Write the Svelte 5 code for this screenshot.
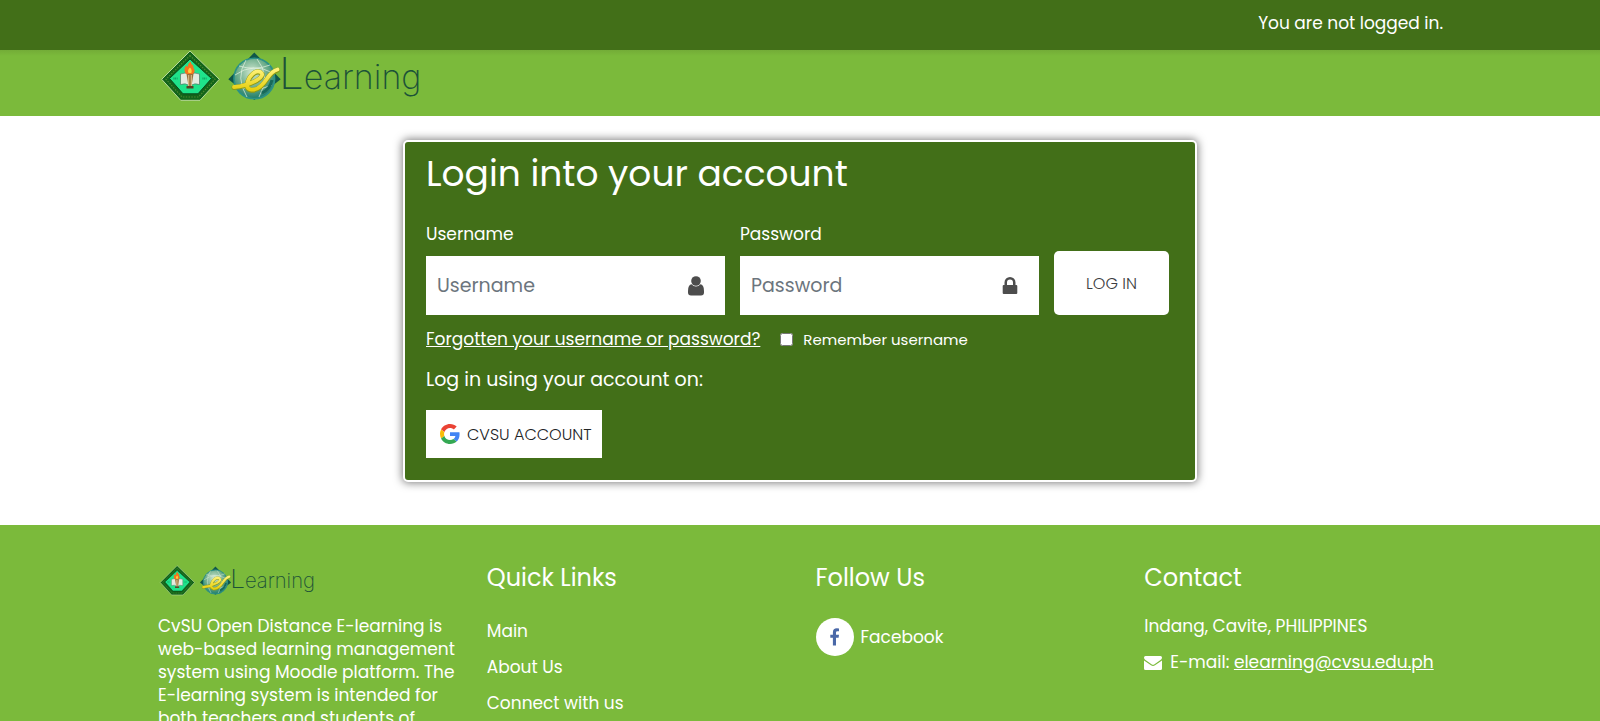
<script>
  const links = ['Main', 'About Us', 'Connect with us'];
  let username = $state('');
  let password = $state('');
  let remember = $state(false);
</script>

{#snippet brand()}
  <svg viewBox="0 0 265 56" role="img" aria-label="eLearning">
    <defs>
      <radialGradient id="globe" cx="45%" cy="35%" r="65%">
        <stop offset="0" stop-color="#d3e9d3" />
        <stop offset="0.55" stop-color="#6fae8c" />
        <stop offset="1" stop-color="#1f7d6b" />
      </radialGradient>
      <linearGradient id="swoosh" x1="0" y1="0" x2="0" y2="1">
        <stop offset="0" stop-color="#fff27a" />
        <stop offset="1" stop-color="#e6cf10" />
      </linearGradient>
    </defs>
    <path d="M32 1 61.300 29.300 42 50.300H22.700L3.700 29.300Z" fill="#12641a" stroke="#b9d99a" stroke-width="1" />
    <path d="M32 5.500 57 29.300 40.500 47H24L8 29.300Z" fill="none" stroke="#4f8630" stroke-width="1.200" stroke-dasharray="1.500 1.300" />
    <path d="M32 9 53.500 28.500 40 43.800H25L11.500 28.500Z" fill="#1fe38b" stroke="#0a4a1c" stroke-width="1" />
    <path d="M15.500 28.500h4M44.500 28.500h4" stroke="#0f9a5c" stroke-width="2" stroke-dasharray="1 .7" />
    <path d="M22.500 24q5-2.500 9.500 1 4.500-3.500 9.500-1v10.500q-5-2-9.500 1.500-4.500-3.500-9.500-1.500Z" fill="#e4ebe0" stroke="#587468" stroke-width=".7" />
    <path d="M28.500 24h7l-2 12h-3Z" fill="#99703a" />
    <path d="M30.200 25h1v11h-1zM32.800 25h1v11h-1z" fill="#e1c491" />
    <path d="M28.500 36h7v2.500h-7z" fill="#5b4023" />
    <path d="M28 24q-3.500-5 .5-8.500l1.200 1.500q0-3.500 2.800-5.500.5 3 2.700 4l.3 2.500q2.500 3-.5 6Z" fill="#f5731d" />
    <path d="M30.500 23q-1.500-3 1.500-5.500 2.500 2.500 1.300 5.500Z" fill="#ffd23f" />

    <path d="M96.300 2.500 122.700 29.300 96.300 50 70.300 29.300Z" fill="#10564a" />
    <circle cx="96.300" cy="28.500" r="20.300" fill="url(#globe)" stroke="#2b9187" stroke-width="1.600" />
    <g fill="none" stroke="#e8f4e4" stroke-width=".9" opacity=".75">
      <path d="M77 25q18-13 38-2M79 36q18 7 35-1M88 10q-11 18 1 37M99 9q14 17 2 38M81 16q16 5 31-1" />
    </g>
    <path d="M104 43q8-4 10-13" fill="none" stroke="#17695a" stroke-width="3" />
    <path d="M76 37.500Q88 36.500 99 30.500 107 25.500 102.500 22.500 97 20 91.500 28 86 38 92.500 40 101 41.500 109 29 114 21.500 119.500 20" fill="none" stroke="#8e9914" stroke-width="5" stroke-linecap="round" stroke-linejoin="round" />
    <path d="M76 37Q88 36 99 30 107 25 102.500 22 97 19.500 91.500 27.500 86 37.500 92.500 39.500 101 41 109 28.500 114 21 119.500 19.500" fill="none" stroke="url(#swoosh)" stroke-width="3.800" stroke-linecap="round" stroke-linejoin="round" />
    <text class="wordmark" x="121" y="39"><tspan font-size="44">L</tspan><tspan font-size="34">earning</tspan></text>
  </svg>
{/snippet}

<div class="page">
  <div class="topbar">
    <div class="container">You are not logged in.</div>
  </div>

  <header>
    <div class="container">
      <a class="logo" href="#home">{@render brand()}</a>
    </div>
  </header>

  <main>
    <section class="card">
      <h1>Login into your account</h1>
      <form onsubmit={(e) => e.preventDefault()}>
        <div class="fields">
          <div class="field">
            <label for="username">Username</label>
            <div class="control">
              <input id="username" type="text" placeholder="Username" bind:value={username} />
              <svg width="18" height="20" viewBox="0 0 18 20" aria-hidden="true">
                <circle cx="9" cy="5" r="4.800" />
                <path d="M4.600 8.300Q6.400 10.600 9 10.600T13.400 8.300Q17 8.700 17 15v1.500q0 3-3 3H4q-3 0-3-3V15Q1 8.700 4.600 8.300Z" />
              </svg>
            </div>
          </div>
          <div class="field">
            <label for="password">Password</label>
            <div class="control">
              <input id="password" type="password" placeholder="Password" bind:value={password} />
              <svg width="18" height="20" viewBox="0 0 18 20" aria-hidden="true">
                <path fill-rule="evenodd" d="M3.500 9V6.500a5.500 5.500 0 0 1 11 0V9h.7q1.100 0 1.100 1.100v6.800q0 1.100-1.100 1.100H2.800q-1.100 0-1.100-1.100v-6.800Q1.700 9 2.800 9ZM6 9h6V6.500a3 3 0 0 0-6 0Z" />
              </svg>
            </div>
          </div>
          <button class="login" type="submit">LOG IN</button>
        </div>
        <div class="options">
          <a href="#forgot">Forgotten your username or password?</a>
          <label class="remember">
            <input type="checkbox" bind:checked={remember} />
            Remember username
          </label>
        </div>
      </form>
      <h2>Log in using your account on:</h2>
      <a class="provider" href="#google">
        <svg width="20" height="20" viewBox="0 0 48 48" aria-hidden="true">
          <path fill="#EA4335" d="M24 9.500c3.540 0 6.710 1.220 9.210 3.600l6.850-6.850C35.900 2.380 30.470 0 24 0 14.620 0 6.510 5.380 2.560 13.220l7.980 6.190C12.430 13.720 17.740 9.500 24 9.500z" />
          <path fill="#4285F4" d="M46.980 24.550c0-1.570-.15-3.090-.38-4.550H24v9.020h12.940c-.58 2.960-2.260 5.480-4.780 7.180l7.730 6c4.510-4.180 7.090-10.360 7.090-17.650z" />
          <path fill="#FBBC05" d="M10.530 28.590A14.500 14.500 0 0 1 9.770 24c0-1.600.27-3.140.76-4.590l-7.980-6.190A23.900 23.900 0 0 0 0 24c0 3.880.92 7.540 2.560 10.780z" />
          <path fill="#34A853" d="M24 48c6.480 0 11.930-2.130 15.890-5.810l-7.730-6c-2.150 1.450-4.920 2.300-8.160 2.300-6.260 0-11.570-4.220-13.470-9.910l-7.980 6.190C6.510 42.620 14.620 48 24 48z" />
        </svg>
        CVSU ACCOUNT
      </a>
    </section>
  </main>

  <footer>
    <div class="container columns">
      <div>
        <div class="footlogo">{@render brand()}</div>
        <p>
          CvSU Open Distance E-learning is web-based learning management system using Moodle platform. The
          E-learning system is intended for both teachers and students of
        </p>
      </div>
      <div>
        <h3>Quick Links</h3>
        <ul>
          {#each links as link}
            <li><a href="#links">{link}</a></li>
          {/each}
        </ul>
      </div>
      <div>
        <h3>Follow Us</h3>
        <a class="social" href="#facebook">
          <span class="disc">
            <svg width="10" height="18" viewBox="0 0 10 18" aria-hidden="true">
              <path d="M9 .4v2.900H7.300Q6 3.300 6 4.600v2.200h3l-.4 3H6v7.700H2.900V9.800H.3v-3h2.600V4.400Q2.900.2 6.900.2 8.300.2 9 .4Z" fill="#4a68a8" />
            </svg>
          </span>
          Facebook
        </a>
      </div>
      <div>
        <h3>Contact</h3>
        <p>Indang, Cavite, PHILIPPINES</p>
        <p class="mail">
          <svg width="18" height="14" viewBox="0 0 18 14" aria-hidden="true">
            <path d="M0 1.500Q0 0 1.500 0h15Q18 0 18 1.500 18 3 16.500 4L10.500 8.200Q9 9.200 7.500 8.200L1.500 4Q0 3 0 1.500ZM0 4.500 7 9.300q2 1.400 4 0L18 4.500v8q0 1.500-1.500 1.500h-15Q0 14 0 12.500Z" fill="#fff" />
          </svg>
          <span>E-mail: <a href="mailto:elearning@cvsu.edu.ph">elearning@cvsu.edu.ph</a></span>
        </p>
      </div>
    </div>
  </footer>
</div>

<style>
  :global(body) {
    margin: 0;
    background: #fff;
  }
  .page {
    display: flex;
    flex-direction: column;
    height: 100vh;
    overflow: hidden;
    font: 17px/23px Poppins, Inter, sans-serif;
    color: #fff;
  }
  .page :global(*) {
    box-sizing: border-box;
  }
  a {
    color: inherit;
  }
  h1,
  h2,
  h3,
  p,
  ul {
    margin: 0;
    padding: 0;
    font-weight: 400;
  }
  .container {
    width: 100%;
    max-width: 1316px;
    margin: 0 auto;
    padding: 0 15px 0 16px;
  }
  .topbar {
    flex: none;
    background: #426f18;
    text-align: right;
    padding: 12px 0 15px;
  }
  header {
    flex: none;
    background: linear-gradient(#73ac37, #7bba3b 6px);
    padding-bottom: 10px;
  }
  .logo {
    display: block;
    width: 265px;
  }
  svg {
    display: block;
    flex: none;
    overflow: visible;
  }
  .logo svg,
  .footlogo svg {
    width: 100%;
  }
  .wordmark {
    font-family: Inter, sans-serif;
    font-weight: 200;
    fill: #1c5238;
  }
  main {
    flex: none;
    padding: 24px 15px 43px;
  }
  .card {
    max-width: 794px;
    margin: 0 auto;
    padding: 10px 26px 22px 21px;
    background: #426f18;
    border: 2px solid #fff;
    border-radius: 5px;
    box-shadow: 0 0 8px 1px rgba(0, 0, 0, 0.5);
  }
  h1 {
    font-size: 36px;
    line-height: 44px;
    margin-bottom: 27px;
  }
  .fields {
    display: flex;
    align-items: flex-end;
    gap: 15px;
  }
  .field {
    flex: 1;
    min-width: 0;
  }
  .field label {
    display: block;
    margin-bottom: 10px;
  }
  .control {
    display: flex;
    align-items: center;
    background: #fff;
    padding-right: 20px;
  }
  .control input {
    flex: 1;
    min-width: 0;
    height: 59px;
    padding: 0 11px;
    border: 0;
    background: none;
    font: inherit;
    font-size: 19px;
    color: #495057;
  }
  .control input::placeholder {
    color: #6c757d;
    opacity: 1;
  }
  .control svg {
    fill: #4d4d4d;
  }
  .login {
    width: 115px;
    height: 64px;
    border: 0;
    border-radius: 5px;
    background: #fff;
    font: inherit;
    font-size: 16px;
    font-weight: 300;
    color: #3c3d41;
  }
  .options {
    display: flex;
    align-items: center;
    gap: 20px;
    margin-top: 13px;
  }
  .remember {
    display: flex;
    align-items: center;
    gap: 10px;
    font-size: 15px;
  }
  .remember input {
    width: 13px;
    height: 13px;
    margin: 0;
  }
  h2 {
    font-size: 19px;
    line-height: 24px;
    margin: 17px 0 18px;
  }
  .provider {
    display: inline-flex;
    align-items: center;
    gap: 7px;
    height: 48px;
    padding: 0 10px 0 14px;
    background: #fff;
    color: #222426;
    font-size: 16px;
    font-weight: 300;
    text-decoration: none;
    vertical-align: top;
  }
  footer {
    flex: 1 0 auto;
    background: #7bba3b;
    padding-top: 40px;
  }
  .columns {
    display: grid;
    grid-template-columns: repeat(4, 1fr);
    gap: 30px;
  }
  .footlogo {
    width: 158px;
    height: 50px;
  }
  h3 {
    font-size: 24px;
    line-height: 26px;
    margin-bottom: 24px;
  }
  ul {
    list-style: none;
    padding-top: 5px;
  }
  li {
    margin-bottom: 13px;
  }
  li a,
  .social {
    text-decoration: none;
  }
  .social {
    display: flex;
    align-items: center;
    gap: 7px;
    padding-top: 3px;
  }
  .disc {
    display: flex;
    align-items: center;
    justify-content: center;
    width: 38px;
    height: 38px;
    border-radius: 50%;
    background: #fff;
  }
  .mail {
    display: flex;
    align-items: center;
    gap: 8px;
    margin-top: 13px;
    white-space: nowrap;
  }
</style>
